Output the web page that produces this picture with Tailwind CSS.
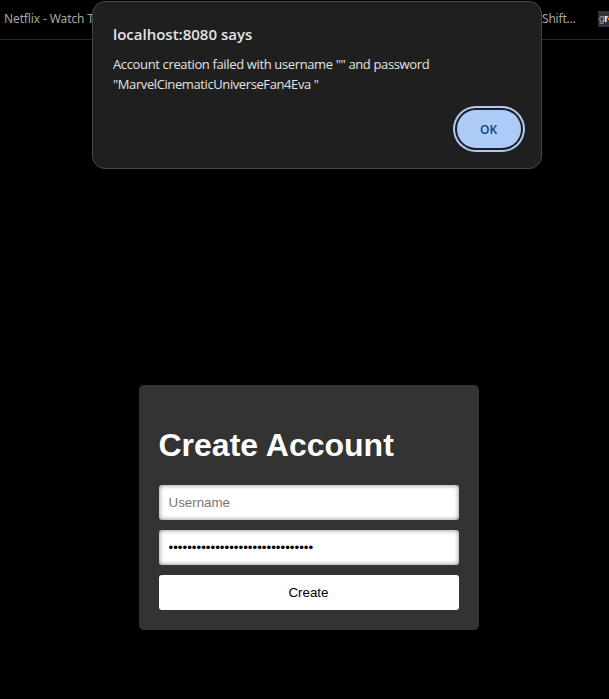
<!DOCTYPE html>
<html lang="en">
<head>
<meta charset="utf-8">
<title>Create Account</title>
<script src="https://cdn.jsdelivr.net/npm/@tailwindcss/browser@4"></script>
</head>
<body class="bg-black h-[699px] overflow-hidden relative font-['Liberation_Sans',Arial,sans-serif]">
<header class="h-10 border-b border-[#24263c] flex items-center justify-between pl-1 pb-[2px] text-[12px] text-[#a6a6a6] font-['Noto_Sans','Open_Sans',sans-serif] whitespace-nowrap overflow-hidden">
  <span class="tracking-[-0.12px]">Netflix - Watch TV Shows</span>
  <div class="flex items-center">
    <span class="w-[56px] tracking-[-0.2px]">Shift...</span>
    <span class="w-[11px] h-4 bg-[#30343b] flex items-center font-['Liberation_Sans',sans-serif] text-[10px] leading-[14px] pl-px tracking-[-0.4px]">g<b class="text-white">r</b><i class="w-px h-[2px] ml-auto bg-[#ff7a18]"></i></span>
  </div>
</header>
<main class="pt-[345px]">
  <form class="w-[340px] h-[245px] ml-[139px] bg-[#333] rounded-[5px] p-5 flex flex-col gap-[10px]">
    <h1 class="text-[32px] leading-9 font-bold text-white mt-[22px] mb-[12px] -ml-[0.5px]">Create Account</h1>
    <input type="text" placeholder="Username" class="block w-full h-[35px] shrink-0 rounded-[3px] bg-white px-[9.5px] text-[13.333px] text-black placeholder:text-[#757575] shadow-[inset_0_0_5px_rgba(0,0,0,0.5)] outline-none">
    <input type="password" value="MarvelCinematicUniverseFan4Eva " class="block w-full h-[35px] shrink-0 rounded-[3px] bg-white px-[9.5px] text-[13.333px] text-black shadow-[inset_0_0_5px_rgba(0,0,0,0.5)] outline-none">
    <button type="button" class="w-full h-[35px] shrink-0 rounded-[3px] bg-white text-[13.333px] text-black pr-px">Create</button>
  </form>
</main>
<div role="dialog" class="absolute left-[92px] top-[1px] w-[450px] h-[168px] rounded-[13px] bg-[#1f1f1f] border border-[#474747] px-5 pt-[22px] flex flex-col font-['Open_Sans','Noto_Sans',sans-serif] text-[#e3e3e3]">
  <h2 class="text-[15px] leading-[20px] font-semibold whitespace-nowrap"><span>localhost:8080 says</span></h2>
  <p class="mt-[10px] text-[13px] leading-5 tracking-[-0.36px] whitespace-nowrap"><span>Account creation failed with username "" and password</span><br><span class="tracking-[-0.4px]">"MarvelCinematicUniverseFan4Eva "</span></p>
  <button type="button" class="self-end mt-[16px] w-[64px] h-[38px] rounded-full bg-[#aecaf7] text-[#0b4284] text-[12px] font-semibold pr-px pt-px shadow-[0_0_0_2px_#1f1f1f,0_0_0_4px_#aecaf7]">OK</button>
</div>
</body>
</html>
